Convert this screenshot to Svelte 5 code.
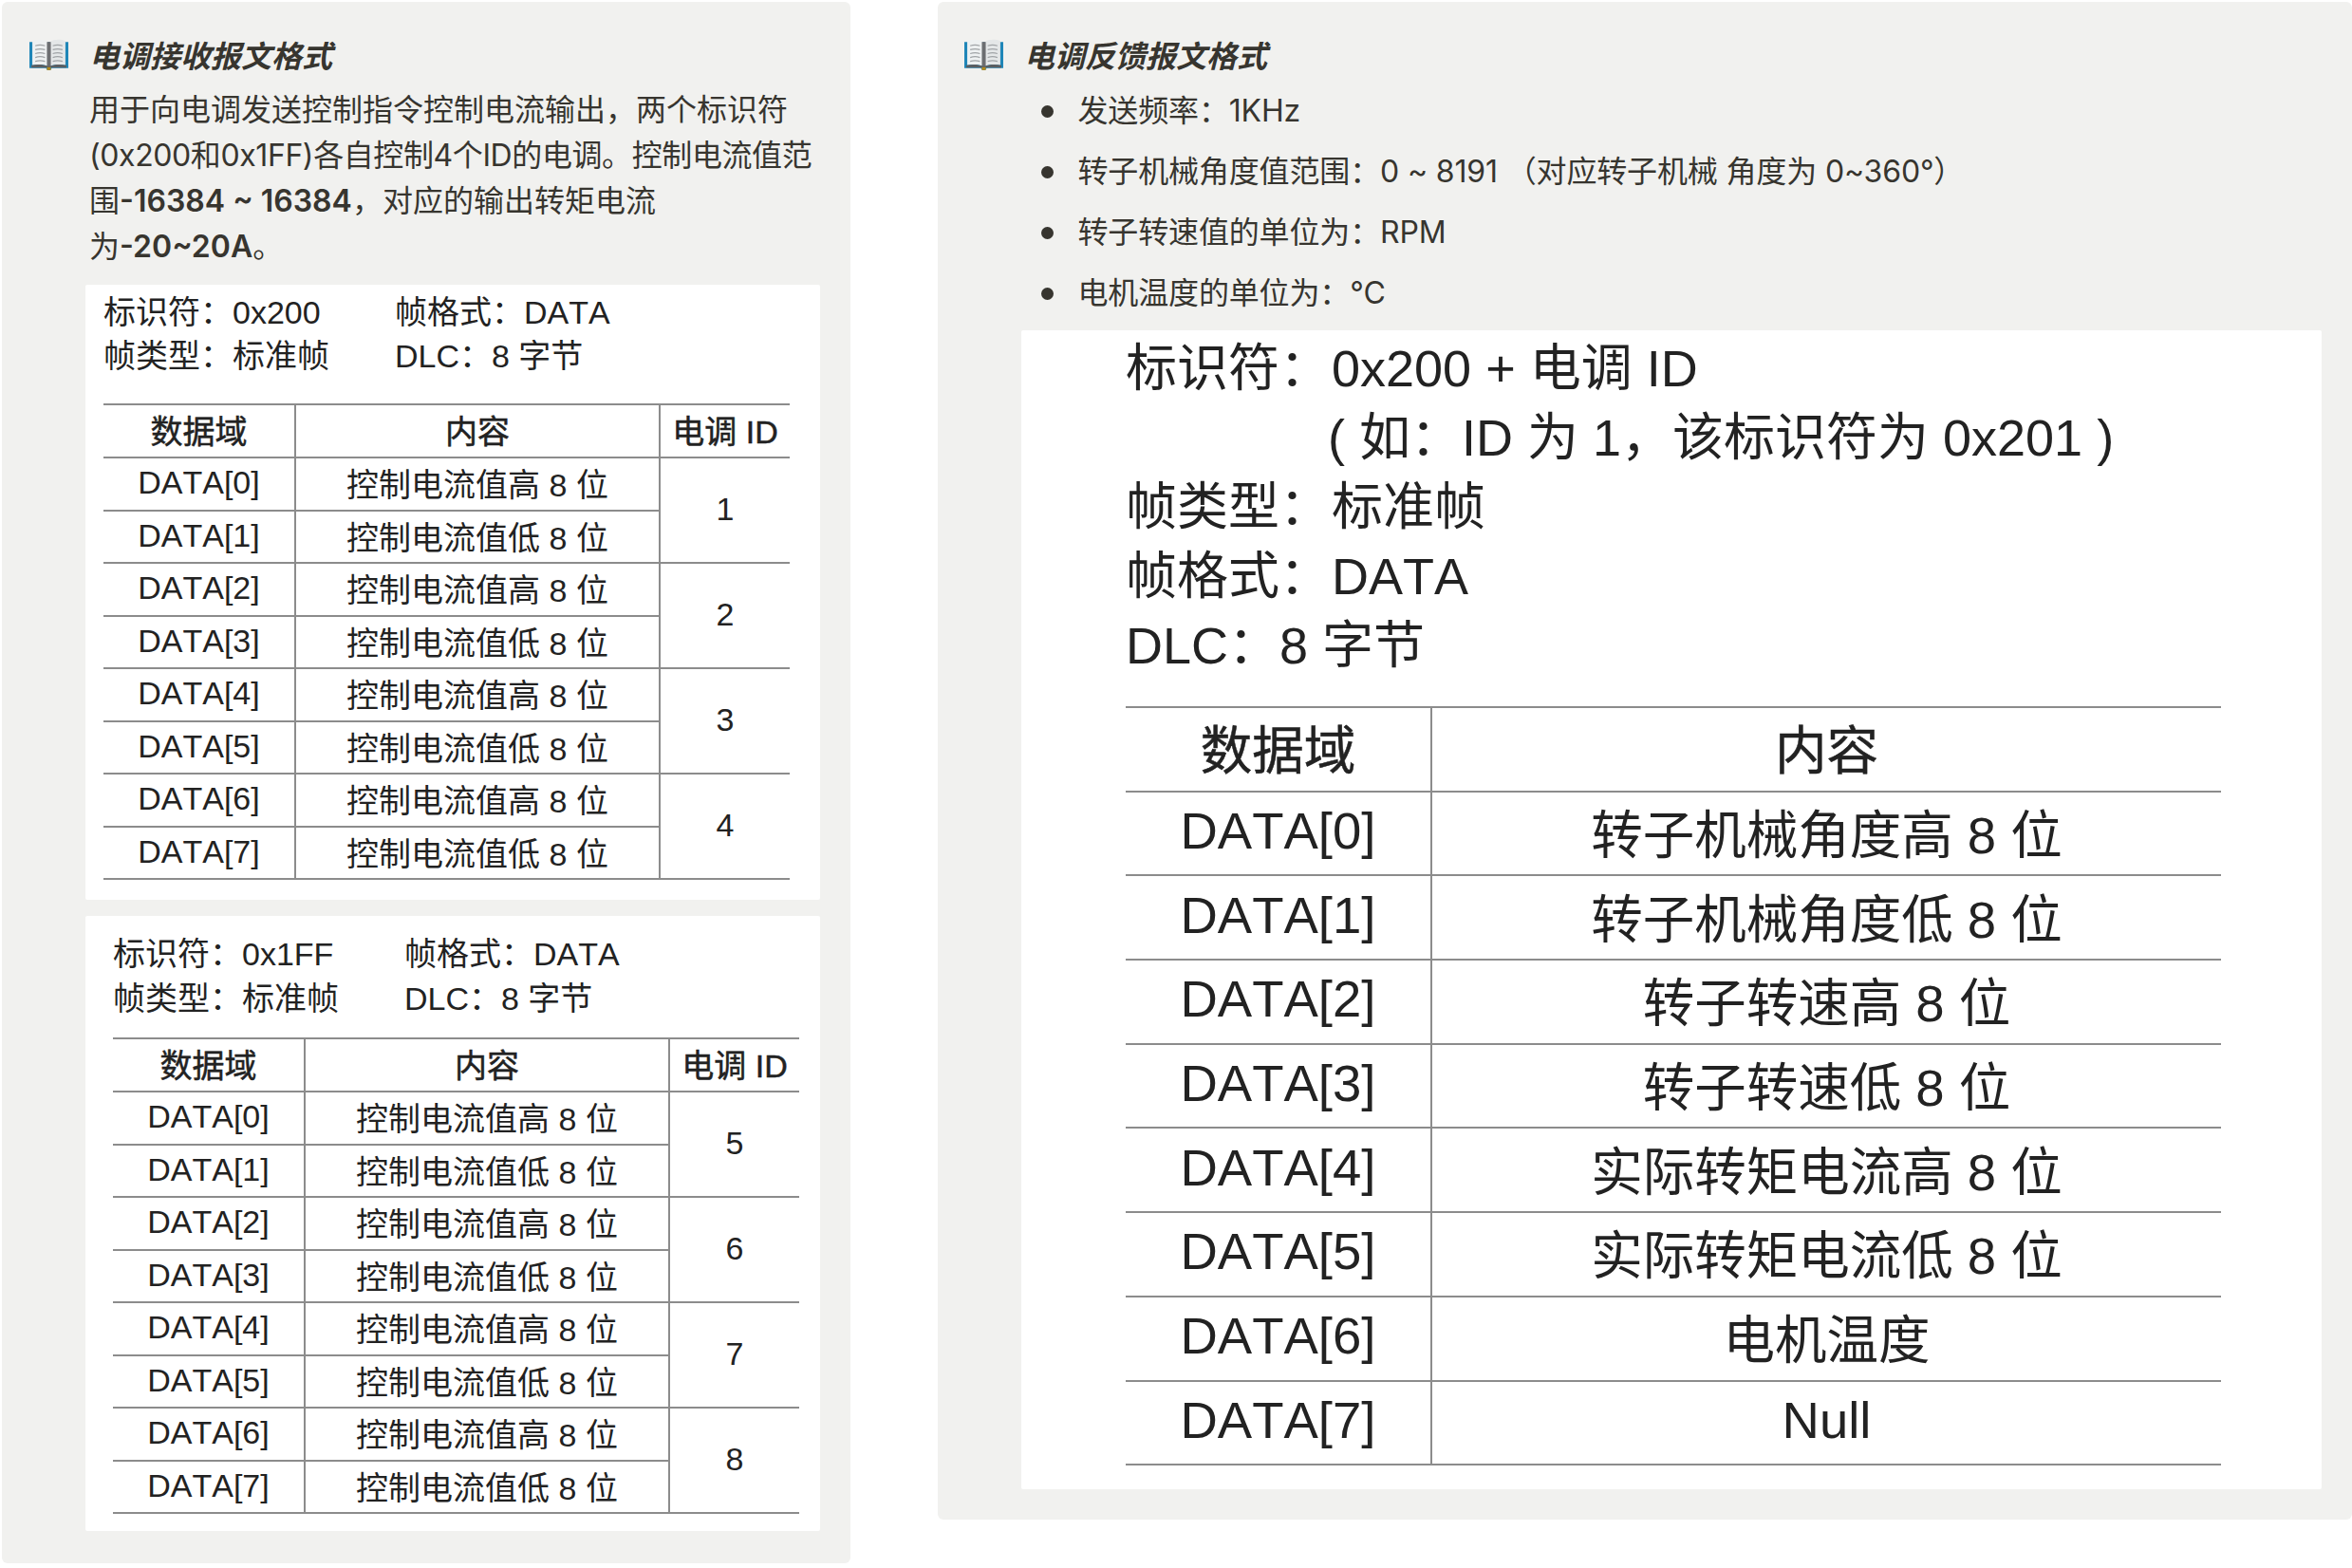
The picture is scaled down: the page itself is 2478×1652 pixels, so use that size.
<script>
  const motors = [
    { id: 1, start: 0 },
    { id: 2, start: 2 },
    { id: 3, start: 4 },
    { id: 4, start: 6 }
  ];
  const motors2 = [
    { id: 5, start: 0 },
    { id: 6, start: 2 },
    { id: 7, start: 4 },
    { id: 8, start: 6 }
  ];
  const feedback = [
    '转子机械角度高 8 位',
    '转子机械角度低 8 位',
    '转子转速高 8 位',
    '转子转速低 8 位',
    '实际转矩电流高 8 位',
    '实际转矩电流低 8 位',
    '电机温度',
    'Null'
  ];
</script>

{#snippet book()}
  <svg class="book" viewBox="0 0 40 34" aria-hidden="true">
    <path d="M0 4h40v27H23l-1.500 2h-3L17 31H0z" fill="#1f86b8" />
    <path d="M3 3c5-2 12-2 16 1v25c-4-2-11-2-16-1z" fill="#eef1f2" />
    <path d="M37 3c-5-2-12-2-16 1v25c4-2 11-2 16-1z" fill="#e4e7e8" />
    <path d="M18 4h4v26h-4z" fill="#6c6e71" />
    <path d="M6 8c3-1 7-1 10 0M6 12c3-1 7-1 10 0M6 16c3-1 7-1 10 0M6 20c3-1 7-1 10 0M6 24c3-1 7-1 10 0M24 8c3-1 7-1 10 0M24 12c3-1 7-1 10 0M24 16c3-1 7-1 10 0M24 20c3-1 7-1 10 0M24 24c3-1 7-1 10 0" fill="none" stroke="#a0a4a7" stroke-width="1.200" />
    <path d="M2 28c6-1 12-1 17 1h2c5-2 11-2 17-1v2.500H2z" fill="#5b5e61" />
    <path d="M18 30h4v3h-4z" fill="#b58a1c" />
  </svg>
{/snippet}

{#snippet escTable(groups)}
  <table class="esc">
    <thead>
      <tr><th class="c1">数据域</th><th class="c2">内容</th><th class="c3">电调 ID</th></tr>
    </thead>
    <tbody>
      {#each groups as g}
        <tr>
          <td>DATA[{g.start}]</td>
          <td>控制电流值高 8 位</td>
          <td rowspan="2" class="idcell">{g.id}</td>
        </tr>
        <tr>
          <td>DATA[{g.start + 1}]</td>
          <td>控制电流值低 8 位</td>
        </tr>
      {/each}
    </tbody>
  </table>
{/snippet}

<main>
  <section class="panel left">
    <h3>{@render book()}<span>电调接收报文格式</span></h3>
    <p class="intro">
      用于向电调发送控制指令控制电流输出，两个标识符<br />
      <span class="tight">(0x200和0x1FF)各自控制4个ID的电调。控制电流值范</span><br />
      围<strong>-16384 ~ 16384</strong>，对应的输出转矩电流<br />
      为<strong>-20~20A</strong>。
    </p>

    <div class="card first">
      <div class="meta">
        <span>标识符：0x200</span><span>帧格式：DATA</span>
        <span>帧类型：标准帧</span><span>DLC：8 字节</span>
      </div>
      {@render escTable(motors)}
    </div>

    <div class="card second">
      <div class="meta">
        <span>标识符：0x1FF</span><span>帧格式：DATA</span>
        <span>帧类型：标准帧</span><span>DLC：8 字节</span>
      </div>
      {@render escTable(motors2)}
    </div>
  </section>

  <section class="panel right">
    <h3>{@render book()}<span>电调反馈报文格式</span></h3>
    <ul>
      <li>发送频率：1KHz</li>
      <li>转子机械角度值范围：0 ~ 8191 （对应转子机械 角度为 0~360°）</li>
      <li>转子转速值的单位为：RPM</li>
      <li>电机温度的单位为：°C</li>
    </ul>

    <div class="card big">
      <div class="bigmeta">
        <span>标识符：</span><span>0x200 + 电调 ID</span>
        <span></span><span class="note">( 如：ID 为 1，该标识符为 0x201 )</span>
        <span>帧类型：</span><span>标准帧</span>
        <span>帧格式：</span><span>DATA</span>
        <span class="wide">DLC：8 字节</span>
      </div>
      <table class="fb">
        <thead>
          <tr><th class="f1">数据域</th><th>内容</th></tr>
        </thead>
        <tbody>
          {#each feedback as item, i}
            <tr><td>DATA[{i}]</td><td>{item}</td></tr>
          {/each}
        </tbody>
      </table>
    </div>
  </section>
</main>

<style>
  :global(body) {
    margin: 0;
    background: #fff;
  }

  main {
    display: flex;
    align-items: flex-start;
    width: 2478px;
    height: 1652px;
    padding: 2px 0 0 2px;
    box-sizing: border-box;
    overflow: hidden;
    font-family: "Inter", "Noto Sans CJK SC", sans-serif;
    color: #37352f;
  }

  .panel {
    background: #f1f1ef;
    border-radius: 6px;
    padding-top: 33px;
    box-sizing: border-box;
  }

  .left {
    width: 894px;
    height: 1645px;
    flex: none;
  }

  .right {
    width: 1490px;
    height: 1599px;
    flex: none;
    margin-left: 92px;
  }

  h3 {
    display: flex;
    align-items: center;
    height: 44px;
    margin: 0;
    font-size: 32px;
    font-weight: 700;
    font-style: italic;
  }

  .left h3 {
    padding-left: 29px;
  }

  .right h3 {
    padding-left: 28px;
  }

  .book {
    width: 41px;
    height: 35px;
    margin-right: 22px;
    flex: none;
  }

  .intro {
    margin: 13px 0 16px 92px;
    font-size: 32px;
    line-height: 48px;
    white-space: nowrap;
  }

  .intro strong {
    font-weight: 600;
  }

  .tight {
    letter-spacing: -0.4px;
  }

  ul {
    list-style: none;
    margin: 14px 0 15px;
    padding: 0 0 0 109px;
    font-size: 32px;
    letter-spacing: -0.15px;
  }

  li {
    position: relative;
    padding-left: 38.500px;
    line-height: 48px;
    margin-bottom: 16px;
  }

  li:last-child {
    margin-bottom: 0;
  }

  li::before {
    content: '';
    position: absolute;
    left: 0;
    top: 18px;
    width: 13px;
    height: 13px;
    border-radius: 50%;
    background: #37352f;
  }

  .card {
    background: #fff;
    border-radius: 2px;
    box-sizing: border-box;
    font-family: "Liberation Sans", "Noto Sans CJK SC", sans-serif;
    font-kerning: none;
    color: #222;
  }

  .first,
  .second {
    width: 774px;
    margin-left: 88px;
    font-size: 34px;
  }

  .first {
    height: 648px;
    padding: 6px 0 0 19px;
  }

  .second {
    height: 648px;
    margin-top: 17px;
    padding: 17px 0 0 29px;
  }

  .meta {
    display: grid;
    grid-template-columns: 307px auto;
    justify-content: start;
    line-height: 46px;
  }

  .first .meta {
    margin-bottom: 27px;
  }

  .second .meta {
    line-height: 47px;
    margin-bottom: 17px;
  }

  table {
    border-collapse: collapse;
    table-layout: fixed;
  }

  th {
    font-weight: 400;
    -webkit-text-stroke: 0.5px currentColor;
    padding-bottom: 4px;
  }

  th,
  td {
    box-sizing: border-box;
    text-align: center;
    border-top: 2px solid #8c8c8c;
    border-bottom: 2px solid #8c8c8c;
    border-left: 2px solid #8c8c8c;
  }

  td {
    padding: 0 0 2px;
  }

  th:first-child,
  td:first-child {
    border-left: 0;
  }

  .esc {
    width: 723px;
  }

  .esc th,
  .esc td {
    height: 55.500px;
  }

  .c1 {
    width: 202px;
  }

  .c2 {
    width: 384px;
  }

  .c3 {
    width: 137px;
  }

  .big {
    width: 1370px;
    height: 1221px;
    margin-left: 88px;
    padding: 4px 0 0 110px;
    font-size: 54px;
  }

  .bigmeta {
    display: grid;
    grid-template-columns: 217px auto;
    justify-content: start;
    line-height: 73px;
    margin-bottom: 27px;
  }

  .wide {
    grid-column: 1 / 3;
  }

  .note {
    white-space: nowrap;
    margin-left: -4px;
  }

  .fb {
    width: 1154px;
    font-size: 54.500px;
  }

  .fb th,
  .fb td {
    height: 88.700px;
  }

  .fb th {
    padding-bottom: 6px;
  }

  .fb td {
    padding-bottom: 5px;
  }

  .f1 {
    width: 322px;
  }
</style>
